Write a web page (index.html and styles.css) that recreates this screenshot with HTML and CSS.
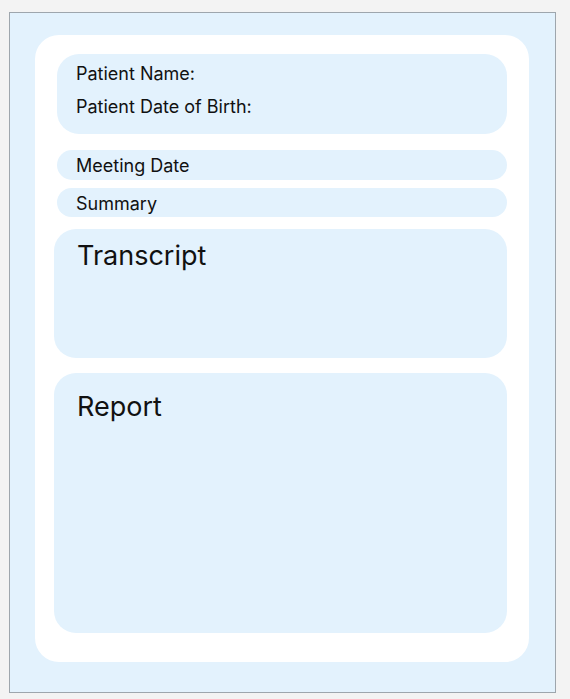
FILE: index.html
```html
<!DOCTYPE html>
<html>
<head>
<meta charset="utf-8">
<link rel="stylesheet" href="styles.css">
</head>
<body>
<div class="panel">
  <div class="card">
    <div class="box patient">
      <div class="line">Patient Name:</div>
      <div class="line">Patient Date of Birth:</div>
    </div>
    <div class="pill meeting">Meeting Date</div>
    <div class="pill summary">Summary</div>
    <div class="box big transcript"><div class="title">Transcript</div></div>
    <div class="box big report"><div class="title">Report</div></div>
  </div>
</div>
</body>
</html>
```
FILE: styles.css
```css
html, body { margin: 0; padding: 0; }
body {
  background: #f3f3f3;
  font-family: Inter, "Noto Sans", sans-serif;
  color: #111;
  width: 570px;
  height: 699px;
}
.panel {
  margin: 12px 0 0 9px;
  width: 547px;
  height: 681px;
  background: #e3f2fd;
  border: 1px solid #9ea6ad;
  padding: 22px 0 0 25px;
  box-sizing: border-box;
}
.card {
  width: 494px;
  height: 627px;
  background: #ffffff;
  border-radius: 24px;
  padding: 19px 22px 0 19px;
  box-sizing: border-box;
  display: flex;
  flex-direction: column;
}
.box, .pill { background: #e3f2fd; }
.patient {
  margin-left: 3px;
  height: 80px;
  border-radius: 22px;
  padding: 3px 19px 0;
  box-sizing: border-box;
  font-size: 18px;
}
.patient .line { line-height: 33px; }
.pill {
  margin-left: 3px;
  height: 30px;
  border-radius: 15px;
  padding: 0 19px;
  font-size: 18px;
  line-height: 31px;
}
.meeting { margin-top: 16px; }
.summary { margin-top: 8px; height: 29px; line-height: 31px; }
.big {
  border-radius: 22px;
  padding: 7px 23px 0;
  box-sizing: border-box;
}
.title { font-size: 27px; line-height: 40px; }
.transcript { margin-top: 12px; height: 129px; padding-top: 7px; }
.report { margin-top: 15px; height: 260px; padding-top: 14px; }
```
